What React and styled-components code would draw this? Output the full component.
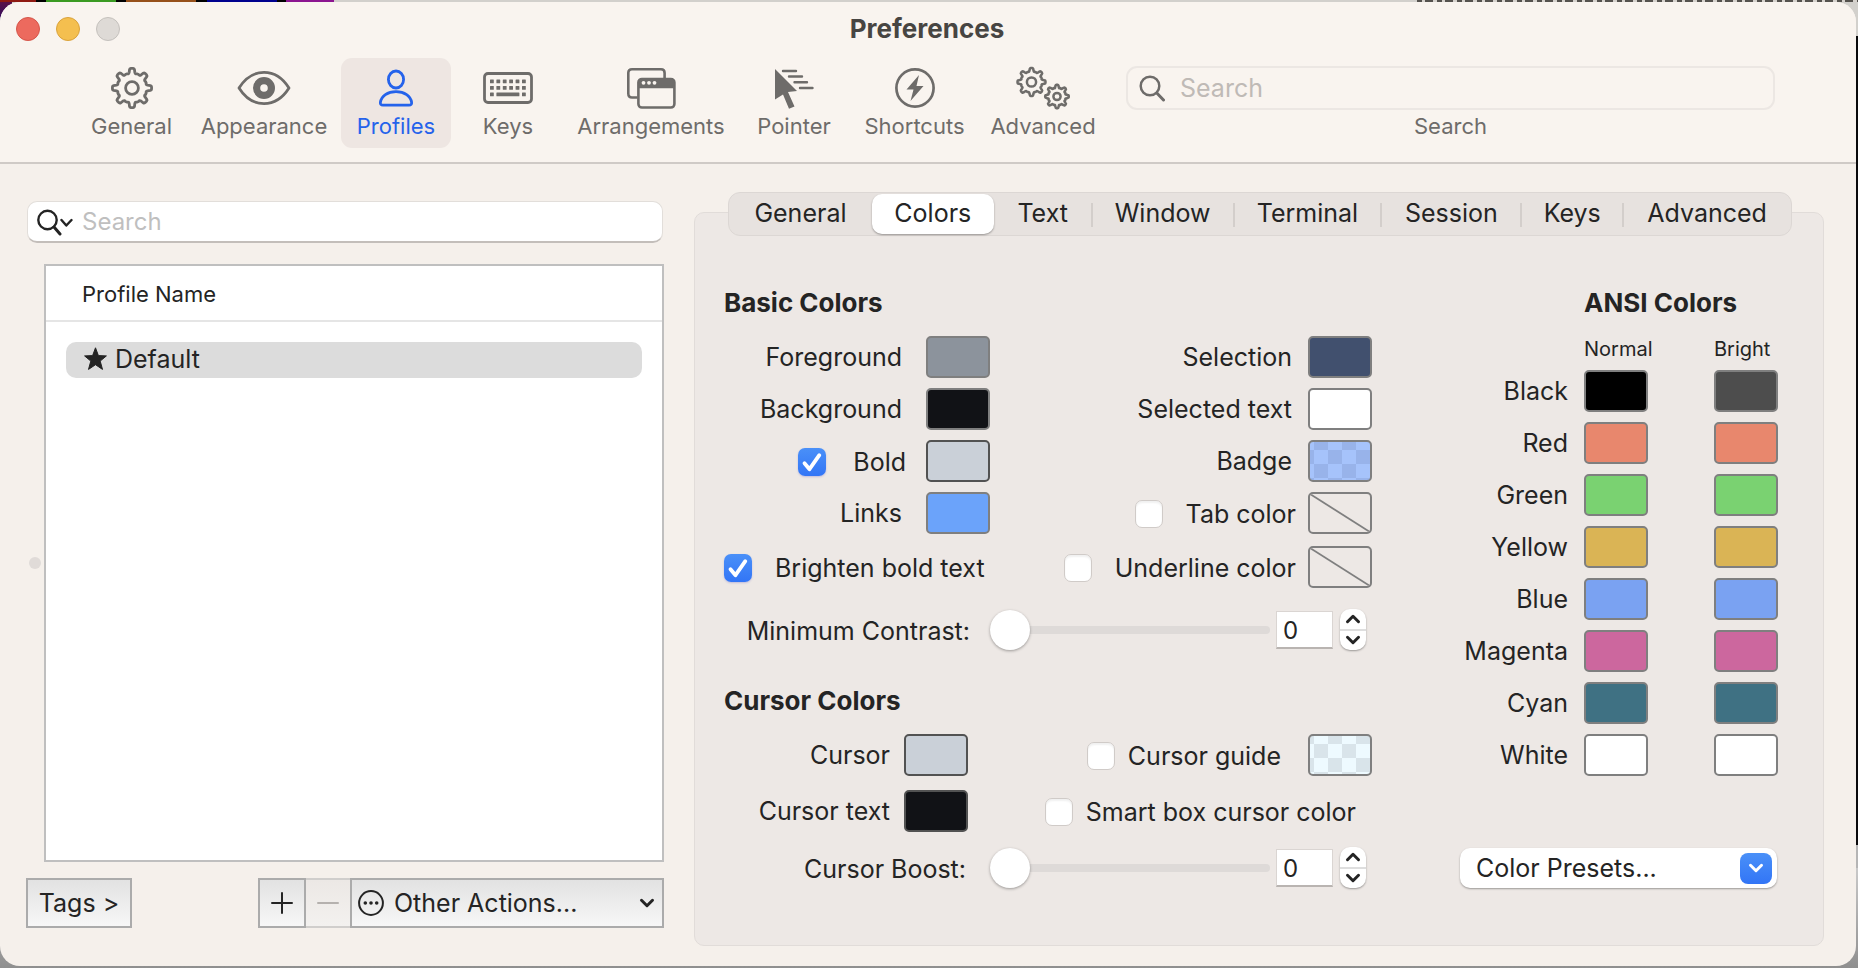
import React, { useState } from "react";
import styled, { createGlobalStyle, css } from "styled-components";

const GlobalStyle = createGlobalStyle`
  *, *::before, *::after { box-sizing: border-box; }
  body { margin: 0; }
  body, button, input, select {
    font-family: Inter, "Liberation Sans", sans-serif;
    font-size: 25px;
    line-height: 32px;
    color: #242424;
  }
  button, input, select { margin: 0; padding: 0; border: 0; background: none; }
  svg { display: block; }
`;

/* ---------- window ---------- */

const Desktop = styled.div`
  min-height: 100vh;
  padding: 2px 2px 2px 0;
  display: flex;
  background:
    linear-gradient(90deg, #8f1a12 36px, #000 36px 46px, #3a9a22 46px 116px, #000 116px 126px,
      #96501a 126px 196px, #000 196px 207px, #00008e 207px 277px, #000 277px 286px,
      #8c1590 286px 334px, transparent 334px) 0 0 / 100% 2px no-repeat,
    repeating-linear-gradient(90deg, #55524e 0 5px, #d6d2cd 5px 8px, #55524e 8px 16px, #d6d2cd 16px 20px) 100% 0 / 441px 2px no-repeat,
    linear-gradient(#5a1048, #1c0a6a) 0 2px / 12px 26px no-repeat,
    linear-gradient(#d2d0cc, #d2d0cc) 100% 0 / 100% 36px no-repeat,
    linear-gradient(#0a0a0c, #0a0a0c) 100% 36px / 4px 809px no-repeat,
    linear-gradient(#c9c9c9, #8f8f8f) 0 100% / 100% 100px no-repeat,
    #b5b5b5;
`;

const Window = styled.main`
  flex: 1;
  display: flex;
  flex-direction: column;
  border-radius: 20px;
  overflow: hidden;
  background: #f5f0eb;
`;

const Header = styled.header`
  background: #f9f4ef;
  border-bottom: 2px solid #cfcac6;
`;

const TitleBar = styled.div`
  display: grid;
  grid-template-columns: 1fr auto 1fr;
  align-items: center;
  height: 54px;
  margin-bottom: 2px;
  padding: 0 18px 0 16px;
`;

const Lights = styled.div`
  display: flex;
  gap: 16px;
`;

const Light = styled.button`
  width: 24px;
  height: 24px;
  border-radius: 50%;
  background: ${(p) => p.$fill};
  border: 1px solid ${(p) => p.$edge};
`;

const Title = styled.h1`
  margin: 0;
  font-size: 26px;
  line-height: 32px;
  font-weight: 700;
  color: #474542;
`;

const Toolbar = styled.nav`
  display: flex;
  height: 104px;
  padding: 0 81px 0 76px;
`;

const ToolButton = styled.button`
  width: ${(p) => p.$width}px;
  height: 90px;
  flex: none;
  display: flex;
  flex-direction: column;
  align-items: center;
  padding-top: 8px;
  gap: 2px;
  border-radius: 11px;
  font-size: 22px;
  line-height: 28px;
  color: ${(p) => (p.$active ? "#2563eb" : "#6e6c6a")};
  background: ${(p) => (p.$active ? "#eee6e2" : "transparent")};
`;

const IconSlot = styled.span`
  height: 44px;
  display: flex;
  align-items: center;
`;

const ToolSearch = styled.label`
  flex: 1;
  min-width: 0;
  margin-left: 18px;
  padding-top: 8px;
  display: flex;
  flex-direction: column;
  align-items: center;
  gap: 2px;
  font-size: 22px;
  line-height: 28px;
  color: #6e6c6a;
`;

const ToolSearchBox = styled.span`
  width: 100%;
  height: 44px;
  display: flex;
  align-items: center;
  gap: 15px;
  padding: 0 11px;
  border: 2px solid #ece7e3;
  border-radius: 11px;
`;

const SearchInput = styled.input`
  flex: 1;
  min-width: 0;
  outline: none;
  font-size: ${(p) => p.$size}px;
  &::placeholder { color: ${(p) => p.$hint}; opacity: 1; }
`;

/* ---------- profile list ---------- */

const Body = styled.div`
  flex: 1;
  display: flex;
  gap: 30px;
  padding: 28px 32px 20px 26px;
`;

const Sidebar = styled.section`
  flex: 0 0 638px;
  display: flex;
  flex-direction: column;
  padding: 9px 0 18px;
`;

const ProfileSearch = styled.label`
  height: 42px;
  display: flex;
  align-items: center;
  gap: 9px;
  margin: 0 1px;
  padding: 0 9px;
  border-radius: 10px;
  background: #fff;
  border: 1px solid #e2deda;
  border-bottom: 2px solid #c3beba;
`;

const ListArea = styled.div`
  flex: 1;
  display: flex;
  align-items: center;
  margin: 21px 0 16px;
`;

const SplitHandle = styled.span`
  width: 12px;
  height: 12px;
  margin: 0 3px;
  border-radius: 50%;
  background: #e0dbd8;
`;

const ProfileList = styled.div`
  flex: 1;
  align-self: stretch;
  background: #fff;
  border: 2px solid #bfbfbf;
`;

const ListHeader = styled.div`
  height: 56px;
  padding: 14px 36px;
  font-size: 22px;
  line-height: 28px;
  border-bottom: 2px solid #e5e5e5;
`;

const ProfileRow = styled.button`
  width: calc(100% - 40px);
  height: 36px;
  margin: 20px;
  padding: 0 18px 2px;
  display: flex;
  align-items: center;
  gap: 8px;
  border-radius: 10px;
  background: #dcdcdc;
`;

const ListFooter = styled.div`
  display: flex;
  height: 50px;
`;

const BezelButton = styled.button`
  width: ${(p) => p.$width}px;
  display: flex;
  align-items: center;
  justify-content: center;
  border: 2px solid #ababab;
  background: linear-gradient(#e2e2e2, #f7f7f7);
  ${(p) => p.disabled && css`
    border-color: #d0cecc;
    border-width: 2px 0;
    background: linear-gradient(#ece8e5, #f3f1ef);
  `}
`;

const ActionsMenu = styled.label`
  flex: 1;
  display: flex;
  align-items: center;
  padding: 0 7px 0 6px;
  gap: 10px;
  border: 2px solid #ababab;
  background: linear-gradient(#e2e2e2, #f7f7f7);
`;

const Spring = styled.span`
  width: 126px;
`;

const PlainSelect = styled.select`
  flex: 1;
  min-width: 0;
  appearance: none;
  outline: none;
`;

/* ---------- colour settings ---------- */

const Settings = styled.section`
  flex: 1;
  margin-top: 20px;
  border: 1px solid #e1dcd9;
  border-radius: 10px;
  background: #ede8e5;
`;

const Tabs = styled.div`
  display: flex;
  height: 44px;
  margin: -21px 31px 0 33px;
  padding: 1px 0;
  border: 1px solid #dcd7d4;
  border-radius: 12px;
  background: #e7e2df;
`;

const Tab = styled.button`
  flex: ${(p) => p.$share} 0 0;
  min-width: 0;
  display: flex;
  align-items: center;
  justify-content: center;
  padding-bottom: 2px;
  ${(p) => p.$active && css`
    border-radius: 10px;
    background: #fff;
    box-shadow: 0 1px 2px rgba(0, 0, 0, 0.35);
  `}
`;

const TabDivider = styled.span`
  width: 2px;
  height: 24px;
  margin: 9px -1px;
  background: #d3cecb;
`;

const Columns = styled.div`
  display: flex;
  justify-content: space-between;
  padding: 51px 45px 52px 29px;
`;

const MainColumn = styled.div`
  width: 648px;
`;

const Heading = styled.h2`
  margin: ${(p) => p.$top || 0}px 0 17px;
  padding-left: ${(p) => p.$inset || 0}px;
  font-size: 26px;
  line-height: 32px;
  font-weight: 700;
  white-space: nowrap;
`;

const BasicGrid = styled.div`
  display: grid;
  grid-template-columns: 266px 1fr;
  grid-template-rows: repeat(4, 42px) 44px;
  row-gap: 10px;
  align-items: end;
`;

const CursorGrid = styled(BasicGrid)`
  grid-template-columns: 244px 1fr;
  grid-template-rows: 42px 42px;
  row-gap: 14px;
`;

const Field = styled.div`
  height: 42px;
  display: flex;
  align-items: center;
  justify-content: ${(p) => (p.$start ? "flex-start" : "flex-end")};
  gap: ${(p) => p.$gap}px;
  padding-right: ${(p) => p.$end || 0}px;
  white-space: nowrap;
`;

const CheckLabel = styled.label`
  display: flex;
  align-items: center;
  gap: ${(p) => p.$gap}px;
  padding-top: 2px;
`;

const Checkbox = styled.input`
  appearance: none;
  width: 28px;
  height: 28px;
  border-radius: 7px;
  background: #fff;
  border: 1px solid #d0cbc8;
  box-shadow: inset 0 2px 2px rgba(0, 0, 0, 0.06);
  &:checked {
    border: 0;
    box-shadow: 0 1px 2px rgba(60, 60, 200, 0.25);
    background:
      url("data:image/svg+xml,%3Csvg xmlns='http://www.w3.org/2000/svg' viewBox='0 0 28 28'%3E%3Cpath d='M6.500 15.200l5 6L21.300 7.200' fill='none' stroke='white' stroke-width='3.800' stroke-linecap='round' stroke-linejoin='round'/%3E%3C/svg%3E"),
      linear-gradient(#4a90f8, #3275f6);
  }
`;

const Swatch = styled.button`
  display: block;
  width: 64px;
  height: 42px;
  flex: none;
  border: 2px solid ${(p) => (p.$dark ? "#525252" : "#7f7f7f")};
  border-radius: 5px;
  background: ${(p) => p.$fill || "transparent"};
  overflow: hidden;
`;

const SliderRow = styled.div`
  height: 41px;
  margin-top: ${(p) => p.$top}px;
  display: flex;
  align-items: center;
  justify-content: flex-end;
  padding-right: 6px;
`;

const SliderLabel = styled.label`
  padding: 2px ${(p) => p.$gap}px 0 0;
`;

const Slider = styled.input`
  appearance: none;
  width: 280px;
  height: 40px;
  margin-right: 6px;
  &::-webkit-slider-runnable-track {
    height: 8px;
    border-radius: 4px;
    background: #dedad8;
  }
  &::-webkit-slider-thumb {
    appearance: none;
    width: 40px;
    height: 40px;
    margin-top: -16px;
    border-radius: 50%;
    background: #fff;
    box-shadow: 0 1px 3px rgba(0, 0, 0, 0.35);
  }
`;

const NumberInput = styled.input`
  width: 57px;
  height: 38px;
  margin-right: 7px;
  padding: 2px 0 0 6px;
  background: #fff;
  border: 1px solid #dad5d2;
  border-bottom: 2px solid #b9b4b1;
  font-size: 24px;
`;

const Stepper = styled.span`
  width: 26px;
  height: 41px;
  display: flex;
  flex-direction: column;
  border-radius: 10px;
  background: #fff;
  box-shadow: 0 1px 2px rgba(0, 0, 0, 0.35);
`;

const StepButton = styled.button`
  flex: 1;
  display: flex;
  align-items: center;
  justify-content: center;
  & + & { border-top: 2px solid #dedede; }
`;

const AnsiColumn = styled.div`
  width: 319px;
`;

const AnsiTable = styled.table`
  width: 100%;
  table-layout: fixed;
  border-collapse: collapse;
  margin-top: -1px;
  col:nth-child(1) { width: 125px; }
  col:nth-child(2) { width: 130px; }
  col:nth-child(3) { width: 64px; }
  th, td { padding: 0; font-weight: 400; text-align: left; }
  thead th, thead td {
    height: 35px;
    vertical-align: top;
    font-size: 20px;
    line-height: 28px;
  }
  tbody th {
    height: 52px;
    padding: 0 16px 10px 0;
    text-align: right;
  }
  tbody td { padding-bottom: 10px; }
`;

const PresetMenu = styled.label`
  height: 40px;
  margin: 62px 1px 0;
  display: flex;
  align-items: center;
  padding: 0 5px 0 16px;
  border-radius: 10px;
  background: #fff;
  box-shadow: 0 1px 2px rgba(0, 0, 0, 0.35);
`;

const PresetArrow = styled.span`
  width: 32px;
  height: 31px;
  display: flex;
  align-items: center;
  justify-content: center;
  border-radius: 8px;
  background: linear-gradient(#4a90f8, #3275f6);
`;

/* ---------- icons ---------- */

function gearPath(cx, cy, outer, inner, teeth) {
  const step = (Math.PI * 2) / teeth;
  const at = (r, a) => `${(cx + r * Math.sin(a)).toFixed(2)} ${(cy - r * Math.cos(a)).toFixed(2)}`;
  let d = "";
  for (let i = 0; i < teeth; i++) {
    const a = i * step;
    d += `${i ? "L" : "M"}${at(inner + 0.8, a - step * 0.23)}`;
    d += `L${at(outer - 1, a - step * 0.17)}Q${at(outer, a - step * 0.15)} ${at(outer, a - step * 0.08)}`;
    d += `L${at(outer, a + step * 0.08)}Q${at(outer, a + step * 0.15)} ${at(outer - 1, a + step * 0.17)}`;
    d += `L${at(inner + 0.8, a + step * 0.23)}Q${at(inner - 1, a + step * 0.3)} ${at(inner, a + step * 0.42)}`;
    d += `L${at(inner, a + step * 0.58)}Q${at(inner - 1, a + step * 0.7)} ${at(inner + 0.8, a + step * 0.77)}`;
  }
  return d + "Z";
}

const GearIcon = () => (
  <svg width="44" height="44" fill="none" stroke="currentColor" strokeWidth="2.800" strokeLinejoin="round">
    <path d={gearPath(22, 22, 19.6, 15, 8)} />
    <circle cx="22" cy="22" r="6.400" />
  </svg>
);

const EyeIcon = () => (
  <svg width="54" height="36" fill="none" stroke="currentColor" strokeWidth="2.800">
    <path d="M2 18C8 8.500 17 2.400 27 2.400S46 8.500 52 18C46 27.500 37 33.600 27 33.600S8 27.500 2 18Z" strokeLinejoin="round" />
    <path d="M27 7a11 11 0 1 0 0 22a11 11 0 1 0 0-22ZM27 14.200a3.800 3.800 0 1 1 0 7.600a3.800 3.800 0 1 1 0-7.600Z" fill="currentColor" fillRule="evenodd" stroke="none" />
  </svg>
);

const PersonIcon = () => (
  <svg width="36" height="38" fill="none" stroke="currentColor" strokeWidth="2.800" strokeLinejoin="round">
    <ellipse cx="18" cy="10.500" rx="7.600" ry="8.500" />
    <path d="M5 36.200H31Q34 36.200 33.600 33.200C32.600 27 26.500 22.600 18 22.600S3.400 27 2.400 33.200Q2 36.200 5 36.200Z" />
  </svg>
);

const KeyboardIcon = () => (
  <svg width="50" height="32" fill="currentColor">
    <rect x="1.500" y="1.500" width="47" height="29" rx="3.500" fill="none" stroke="currentColor" strokeWidth="2.800" />
    {[7.5, 14].map((y) => [7, 13.4, 19.8, 26.2, 32.6, 39].map((x) => (
      <rect key={`${x}-${y}`} x={x} y={y} width="3.800" height="3.800" rx="0.500" />
    )))}
    <rect x="7" y="20.500" width="3.800" height="3.800" rx="0.500" />
    <rect x="13.400" y="20.500" width="23" height="3.800" rx="0.500" />
    <rect x="39" y="20.500" width="3.800" height="3.800" rx="0.500" />
  </svg>
);

const WindowsIcon = () => (
  <svg width="50" height="42" fill="none" stroke="currentColor" strokeWidth="2.600">
    <path d="M11.500 30.500H6Q2.300 30.500 2.300 26.500V6Q2.300 2.300 6 2.300H35Q38.600 2.300 38.600 6V11" />
    <rect x="12.400" y="12" width="36" height="28.500" rx="3.500" />
    <path d="M12.400 20.500V15.500Q12.400 12 16 12H45Q48.400 12 48.400 15.500V20.500Z" fill="currentColor" stroke="none" />
    <path d="M12.400 20H48.400" />
    <g fill="#f9f4ef" stroke="none">
      <circle cx="17.500" cy="15.800" r="1.900" />
      <circle cx="23" cy="15.800" r="1.900" />
      <circle cx="28.500" cy="15.800" r="1.900" />
    </g>
  </svg>
);

const PointerIcon = () => (
  <svg width="40" height="42" fill="currentColor">
    <path d="M1 2L23 24L14 25L20.500 39.500L15 41.800L9 27.500L1 32.500Z" />
    <g stroke="currentColor" strokeWidth="2.400" strokeLinecap="round">
      <path d="M9 4H22M15 9.500H28M20.500 15.200H33M26 21H38.500" />
    </g>
  </svg>
);

const BoltIcon = () => (
  <svg width="42" height="42" fill="none" stroke="currentColor" strokeWidth="2.700">
    <circle cx="21" cy="21" r="18.600" />
    <path d="M25 8L12.500 22.500H19.500L16.500 34L29.500 19H22.500Z" fill="currentColor" stroke="none" />
  </svg>
);

const GearsIcon = () => (
  <svg width="56" height="46" fill="none" stroke="currentColor" strokeWidth="2.500" strokeLinejoin="round">
    <path d={gearPath(16.5, 17, 14, 10.8, 8)} />
    <circle cx="16.500" cy="17" r="4.600" />
    <path d={gearPath(42, 31.5, 11.8, 9, 8)} />
    <circle cx="42" cy="31.500" r="3.600" />
  </svg>
);

const SearchIcon = ({ color = "#6e6c6a" }) => (
  <svg width="26" height="28" fill="none" stroke={color} strokeWidth="2.500" strokeLinecap="round">
    <circle cx="11" cy="12" r="9.300" />
    <path d="M17.800 19L24.500 26" strokeWidth="3" />
  </svg>
);

const SearchMenuIcon = () => (
  <svg width="36" height="28" fill="none" stroke="#242424" strokeWidth="2.400" strokeLinecap="round" strokeLinejoin="round">
    <circle cx="10.500" cy="12" r="9.200" />
    <path d="M17 19L23 26" strokeWidth="3" />
    <path d="M24.500 12L29.300 17.500L34.500 12" />
  </svg>
);

const StarIcon = () => (
  <svg width="23" height="24" fill="#242424" stroke="#242424" strokeWidth="1" strokeLinejoin="round">
    <path d="M11.500 0.800L14.400 8.600L22.400 8.900L16.200 14.100L18.500 22.400L11.500 17.700L4.500 22.400L6.800 14.100L0.600 8.900L8.600 8.600Z" />
  </svg>
);

const Chevron = ({ up, color = "#242424" }) => (
  <svg width="16" height="12" fill="none" stroke={color} strokeWidth="3" strokeLinecap="round" strokeLinejoin="round">
    <path d={up ? "M2.500 8.700L8 3.300L13.500 8.700" : "M2.500 3.300L8 8.700L13.500 3.300"} />
  </svg>
);

const EllipsisIcon = () => (
  <svg width="26" height="26" fill="#242424">
    <circle cx="13" cy="13" r="11.900" fill="none" stroke="#242424" strokeWidth="2" />
    <circle cx="7.300" cy="13" r="1.800" />
    <circle cx="13" cy="13" r="1.800" />
    <circle cx="18.700" cy="13" r="1.800" />
  </svg>
);

const Stroke = ({ plus }) => (
  <svg width="22" height="22" stroke={plus ? "#242424" : "#b5b1ae"} strokeWidth="2" strokeLinecap="round">
    <path d={plus ? "M1 11H21M11 1V21" : "M1 11H21"} />
  </svg>
);

const EmptyMark = () => (
  <svg width="60" height="38" stroke="#7f7f7f" strokeWidth="1.800">
    <path d="M0 0L60 38" />
  </svg>
);

/* ---------- data ---------- */

const tools = [
  { name: "General", width: 111, Icon: GearIcon },
  { name: "Appearance", width: 154, Icon: EyeIcon },
  { name: "Profiles", width: 110, Icon: PersonIcon, active: true },
  { name: "Keys", width: 114, Icon: KeyboardIcon },
  { name: "Arrangements", width: 172, Icon: WindowsIcon },
  { name: "Pointer", width: 114, Icon: PointerIcon },
  { name: "Shortcuts", width: 127, Icon: BoltIcon },
  { name: "Advanced", width: 130, Icon: GearsIcon },
];

const tabs = [
  { name: "General", share: 143 },
  { name: "Colors", share: 122, active: true },
  { name: "Text", share: 98 },
  { name: "Window", share: 142 },
  { name: "Terminal", share: 148 },
  { name: "Session", share: 140 },
  { name: "Keys", share: 102 },
  { name: "Advanced", share: 168 },
];

const checks = (dark, light, x) =>
  `repeating-conic-gradient(${dark} 0 25%, ${light} 0 50%) ${x}px -6px / 28px 28px`;

const ansi = [
  ["Black", "#000000", "#4d4d4d"],
  ["Red", "#e8876d", "#e8876d"],
  ["Green", "#7ad271", "#7ad271"],
  ["Yellow", "#dab455", "#dab455"],
  ["Blue", "#7aa2f2", "#7aa2f2"],
  ["Magenta", "#cc679e", "#cc679e"],
  ["Cyan", "#3f7183", "#3f7183"],
  ["White", "#ffffff", "#ffffff"],
];

/* ---------- parts ---------- */

function ColorField({ name, fill, gap, dark, end }) {
  const id = name.toLowerCase().replace(/ /g, "-");
  return (
    <Field $gap={gap} $end={end}>
      <label htmlFor={id}>{name}</label>
      <Swatch id={id} $fill={fill} $dark={dark} />
    </Field>
  );
}

function CheckField({ name, checked, gap, checkGap, start, end, children }) {
  return (
    <Field $gap={gap} $start={start} $end={end}>
      <CheckLabel $gap={checkGap}>
        <Checkbox type="checkbox" defaultChecked={checked} />
        {name}
      </CheckLabel>
      {children}
    </Field>
  );
}

function SliderField({ name, top, gap }) {
  const [value, setValue] = useState(0);
  const id = name.toLowerCase().replace(/ /g, "-");
  const change = (next) => setValue(Math.min(100, Math.max(0, Number(next) || 0)));
  return (
    <SliderRow $top={top}>
      <SliderLabel htmlFor={id} $gap={gap}>{name}:</SliderLabel>
      <Slider id={id} type="range" min="0" max="100" value={value} onChange={(e) => change(e.target.value)} />
      <NumberInput aria-label={name} value={value} onChange={(e) => change(e.target.value)} />
      <Stepper>
        <StepButton aria-label="Increase" onClick={() => change(value + 1)}><Chevron up /></StepButton>
        <StepButton aria-label="Decrease" onClick={() => change(value - 1)}><Chevron /></StepButton>
      </Stepper>
    </SliderRow>
  );
}

export default function App() {
  return (
    <Desktop>
      <GlobalStyle />
      <Window>
        <Header>
          <TitleBar>
            <Lights>
              <Light aria-label="Close" $fill="#ec6a5e" $edge="#d5554a" />
              <Light aria-label="Minimize" $fill="#f4bf4f" $edge="#d9a23c" />
              <Light aria-label="Zoom" $fill="#dedad6" $edge="#c4c0bc" />
            </Lights>
            <Title>Preferences</Title>
          </TitleBar>
          <Toolbar>
            {tools.map(({ name, width, Icon, active }) => (
              <ToolButton key={name} $width={width} $active={active}>
                <IconSlot><Icon /></IconSlot>
                {name}
              </ToolButton>
            ))}
            <ToolSearch>
              <ToolSearchBox>
                <SearchIcon />
                <SearchInput $size={25} $hint="#bfbab6" placeholder="Search" />
              </ToolSearchBox>
              Search
            </ToolSearch>
          </Toolbar>
        </Header>

        <Body>
          <Sidebar>
            <ProfileSearch>
              <SearchMenuIcon />
              <SearchInput $size={24} $hint="#bfbfbf" placeholder="Search" aria-label="Search profiles" />
            </ProfileSearch>
            <ListArea>
              <SplitHandle />
              <ProfileList>
                <ListHeader>Profile Name</ListHeader>
                <ProfileRow><StarIcon />Default</ProfileRow>
              </ProfileList>
            </ListArea>
            <ListFooter>
              <BezelButton $width={106}>Tags &gt;</BezelButton>
              <Spring />
              <BezelButton $width={48} aria-label="Add profile"><Stroke plus /></BezelButton>
              <BezelButton $width={44} disabled aria-label="Remove profile"><Stroke /></BezelButton>
              <ActionsMenu>
                <EllipsisIcon />
                <PlainSelect aria-label="Other Actions">
                  <option>Other Actions...</option>
                </PlainSelect>
                <Chevron />
              </ActionsMenu>
            </ListFooter>
          </Sidebar>

          <Settings>
            <Tabs role="tablist">
              {tabs.map(({ name, share, active }, i) => (
                <React.Fragment key={name}>
                  {i > 2 && <TabDivider />}
                  <Tab role="tab" aria-selected={!!active} $share={share} $active={active}>{name}</Tab>
                </React.Fragment>
              ))}
            </Tabs>
            <Columns>
              <MainColumn>
                <Heading>Basic Colors</Heading>
                <BasicGrid>
                  <ColorField name="Foreground" fill="#8c939c" gap={24} />
                  <ColorField name="Selection" fill="#41506e" gap={16} />
                  <ColorField name="Background" fill="#111216" gap={24} />
                  <ColorField name="Selected text" fill="#ffffff" gap={16} />
                  <CheckField name="Bold" checked gap={20} checkGap={27}>
                    <Swatch aria-label="Bold color" $fill="#cad0d8" $dark />
                  </CheckField>
                  <ColorField name="Badge" fill={checks("#98b3ea", "#a6c3fb", -10)} gap={16} />
                  <ColorField name="Links" fill="#6ba3fa" gap={24} />
                  <CheckField name="Tab color" gap={12} checkGap={23}>
                    <Swatch aria-label="Choose tab color"><EmptyMark /></Swatch>
                  </CheckField>
                  <CheckField name="Brighten bold text" checked start checkGap={23} />
                  <CheckField name="Underline color" gap={12} checkGap={23}>
                    <Swatch aria-label="Choose underline color"><EmptyMark /></Swatch>
                  </CheckField>
                </BasicGrid>
                <SliderField name="Minimum Contrast" top={21} gap={20} />

                <Heading $top={35}>Cursor Colors</Heading>
                <CursorGrid>
                  <ColorField name="Cursor" fill="#cad0d8" dark gap={14} />
                  <CheckField name="Cursor guide" gap={27} checkGap={13}>
                    <Swatch aria-label="Cursor guide color" $fill={checks("#d9e4ea", "#eefaff", 4)} />
                  </CheckField>
                  <ColorField name="Cursor text" fill="#111216" dark gap={14} />
                  <CheckField name="Smart box cursor color" checkGap={13} end={16} />
                </CursorGrid>
                <SliderField name="Cursor Boost" top={15} gap={24} />
              </MainColumn>

              <AnsiColumn>
                <Heading $inset={125}>ANSI Colors</Heading>
                <AnsiTable>
                  <colgroup><col /><col /><col /></colgroup>
                  <thead>
                    <tr><td /><th scope="col">Normal</th><th scope="col">Bright</th></tr>
                  </thead>
                  <tbody>
                    {ansi.map(([name, normal, bright]) => (
                      <tr key={name}>
                        <th scope="row">{name}</th>
                        <td><Swatch aria-label={`${name} normal`} $fill={normal} /></td>
                        <td><Swatch aria-label={`${name} bright`} $fill={bright} /></td>
                      </tr>
                    ))}
                  </tbody>
                </AnsiTable>
                <PresetMenu>
                  <PlainSelect aria-label="Color Presets">
                    <option>Color Presets...</option>
                  </PlainSelect>
                  <PresetArrow><Chevron color="#fff" /></PresetArrow>
                </PresetMenu>
              </AnsiColumn>
            </Columns>
          </Settings>
        </Body>
      </Window>
    </Desktop>
  );
}
